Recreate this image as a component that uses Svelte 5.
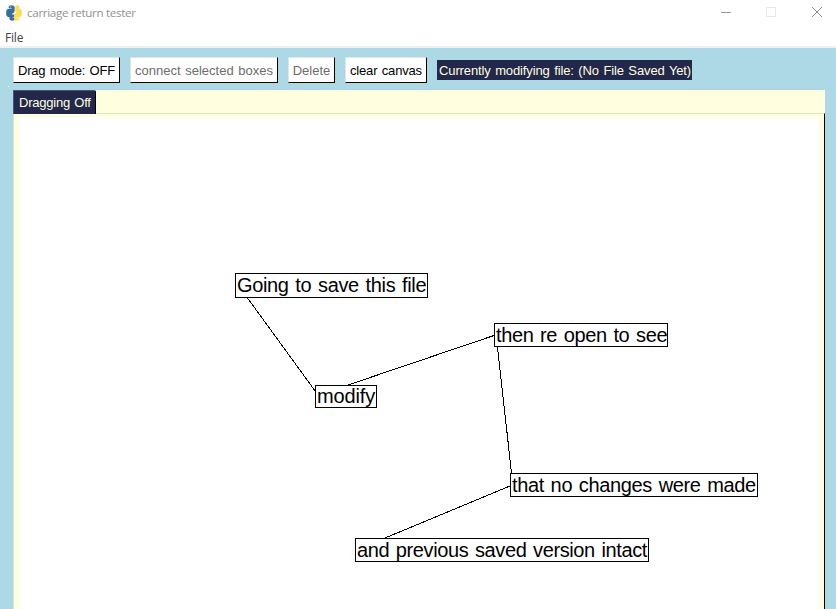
<script>
  const buttons = [
    { label: 'Drag mode: OFF', width: 107, spacing: -0.17 },
    { label: 'connect selected boxes', width: 148, spacing: 0 },
    { label: 'Delete', width: 47, spacing: 0 },
    { label: 'clear canvas', width: 82, spacing: -0.17 }
  ];
  const nodes = [
    { text: 'Going to save this file', x: 235, y: 273, w: 193, h: 25, spacing: -0.35 },
    { text: 'then re open to see', x: 494, y: 323, w: 174, h: 24, spacing: -0.38 },
    { text: 'modify', x: 315, y: 385, w: 62, h: 23, spacing: -0.12 },
    { text: 'that no changes were made', x: 510, y: 473, w: 248, h: 24, spacing: -0.36 },
    { text: 'and previous saved version intact', x: 355, y: 538, w: 294, h: 24, spacing: -0.39 }
  ];
  const edges = [
    [247.5, 298, 315.5, 391.5],
    [348, 385, 494, 335.5],
    [497.5, 347, 511.5, 473],
    [510, 486, 385, 538]
  ];
  const disabled = ['connect selected boxes', 'Delete'];
</script>

<div class="window">
  <header>
    <svg class="logo" width="16" height="16" viewBox="0 0 16 16">
      <path fill="#346f9f" d="M2.7 3.2V1.8Q3 .2 5.2.2Q8.4 0 8.6 2V6Q8.6 7.8 6.8 8.2L5.8 9.4H9V12H6.7V12.6H9V13.8Q8.8 15.8 6.2 15.8Q3.6 15.8 3.4 14V11.9H2Q.3 11.5.2 9.3V6.5Q.3 4.4 2 4.1H5.8V3.5H2.7Z" />
      <path fill="#ffdc52" d="M9.2.5Q12.8-.3 13.4 1.7V4H14.2Q15.8 4.6 15.8 7V9.7Q15.7 11.6 13.9 12H10.4V12.6H13.4V14Q12.9 15.8 10.5 15.8Q8.2 15.7 8 14V10.2Q8.2 8.4 9.8 8.1L10.9 6.6H9.2Z" />
      <circle cx="4.8" cy="1.9" r=".6" fill="#d6e4ef" />
      <circle cx="11.4" cy="14.1" r=".6" fill="#fff6cb" />
    </svg>
    <span class="title">carriage return tester</span>
    <svg class="controls" width="102" height="12" viewBox="0 0 102 12" fill="none">
      <path d="M0 6.5h10" stroke="#999" />
      <rect x="45.5" y="1.5" width="9" height="9" stroke="#e8e8e8" />
      <path d="M91 1l10 10M101 1L91 11" stroke="#8c8c8c" />
    </svg>
  </header>
  <nav><span>File</span></nav>

  <main>
    <div class="toolbar">
      {#each buttons as b}
        <button
          disabled={disabled.includes(b.label)}
          style:width="{b.width}px"
          style:letter-spacing="{b.spacing}px"
        >{b.label}</button>
      {/each}
      <div class="status">Currently modifying file: (No File Saved Yet)</div>
    </div>
    <div class="tabs"><div class="tab">Dragging Off</div></div>
    <div class="panel"><div class="canvas"></div></div>
  </main>

  <svg class="edges" width="836" height="609" viewBox="0 0 836 609">
    <path d="M8 86.5h1" stroke="#ffffe0" />
    {#each edges as [x1, y1, x2, y2]}
      <line {x1} {y1} {x2} {y2} />
    {/each}
  </svg>
  {#each nodes as n}
    <div
      class="node"
      style:left="{n.x}px"
      style:top="{n.y}px"
      style:width="{n.w}px"
      style:height="{n.h}px"
      style:line-height="{n.h === 23 ? 20 : 22}px"
      style:letter-spacing="{n.spacing}px"
    >{n.text}</div>
  {/each}
</div>

<style>
  :global(body) {
    margin: 0;
    overflow: hidden;
  }
  .window {
    position: relative;
    box-sizing: border-box;
    width: 836px;
    height: 609px;
    overflow: hidden;
    display: flex;
    flex-direction: column;
    background: #fff;
    font: 13px/15px 'Liberation Sans', Arial, sans-serif;
    white-space: nowrap;
  }
  header {
    display: flex;
    align-items: center;
    box-sizing: border-box;
    height: 26px;
    padding: 0 13px 0 6px;
  }
  .logo {
    margin-top: -1px;
  }
  .title {
    margin-left: 5px;
    font: 11.6px/16px 'Open Sans', sans-serif;
    letter-spacing: -0.31px;
    color: #929292;
  }
  .controls {
    margin-left: auto;
    margin-top: -2px;
  }
  nav {
    box-sizing: border-box;
    height: 22px;
    padding: 3px 0 0 5px;
    border-bottom: 2px solid #f0f0f0;
    font: 12px/17px 'Open Sans', sans-serif;
    letter-spacing: -0.2px;
    color: #444;
  }
  main {
    flex: 1;
    display: flex;
    flex-direction: column;
    box-sizing: border-box;
    padding: 9px 11px 0 13px;
    background: #add8e6;
    word-spacing: 1px;
  }
  .toolbar {
    display: flex;
    gap: 10px;
    height: 33px;
  }
  button {
    box-sizing: border-box;
    height: 26px;
    padding: 1px 0 0;
    border: 1px solid;
    border-color: #e3e3e3 #000 #000 #e3e3e3;
    border-radius: 0;
    background: #fff;
    color: #000;
    font: inherit;
    word-spacing: inherit;
    white-space: nowrap;
  }
  button:disabled {
    color: #6d6d6d;
  }
  .status {
    box-sizing: border-box;
    width: 255px;
    height: 20px;
    margin-top: 3px;
    padding: 3px 0 0 2px;
    background: #23284b;
    color: #ffffe0;
    letter-spacing: -0.12px;
  }
  .tabs {
    display: flex;
    height: 23px;
    background: #ffffe0;
  }
  .tab {
    box-sizing: border-box;
    width: 83px;
    height: 24px;
    padding: 4px 0 0 5px;
    border-top: 1px solid #4f5370;
    border-left: 1px solid #4f5370;
    border-right: 1px solid #000;
    border-radius: 1px 2px 0 0;
    background: #23284b;
    color: #ffffe0;
    letter-spacing: -0.23px;
    z-index: 1;
  }
  .panel {
    flex: 1;
    display: flex;
    box-sizing: border-box;
    padding: 3px 5px 0;
    border: 1px solid #e3e3c8;
    border-right-color: #000;
    border-bottom: 0;
    background: #ffffe0;
  }
  .canvas {
    flex: 1;
    background: #fff;
  }
  .edges {
    position: absolute;
    inset: 0;
    stroke: #000;
    stroke-width: 1;
    shape-rendering: crispEdges;
  }
  .node {
    position: absolute;
    box-sizing: border-box;
    padding-left: 1px;
    border: 1px solid #000;
    background: #fff;
    font-size: 20px;
    word-spacing: 1.5px;
  }
</style>
